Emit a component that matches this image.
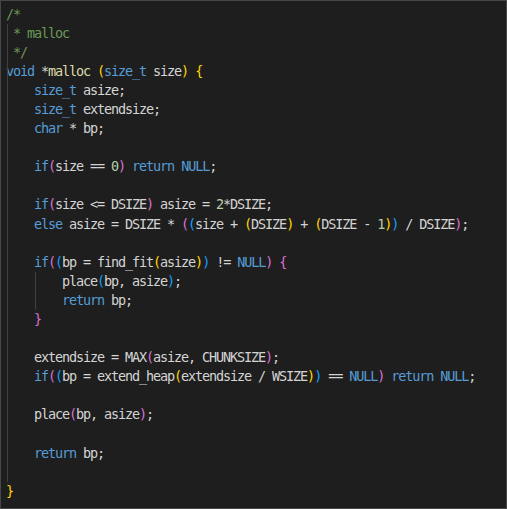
type Tok = [string, string];

const C: Record<string, string> = {
  c: "text-[#6a9955]",
  k: "text-[#569cd6]",
  t: "text-[#d4d4d4]",
  f: "text-[#dcdcaa]",
  n: "text-[#b5cea8]",
  y: "text-[#ffd700]",
  p: "text-[#da70d6]",
  b: "text-[#179fff]",
};

const lines: Tok[][] = [
  [["c", "/*"]],
  [["c", " * malloc"]],
  [["c", " */"]],
  [["k", "void"], ["t", " *"], ["f", "malloc"], ["t", " "], ["y", "("], ["k", "size_t"], ["t", " size"], ["y", ")"], ["t", " "], ["y", "{"]],
  [["t", "    "], ["k", "size_t"], ["t", " asize;"]],
  [["t", "    "], ["k", "size_t"], ["t", " extendsize;"]],
  [["t", "    "], ["k", "char"], ["t", " * bp;"]],
  [],
  [["t", "    "], ["k", "if"], ["p", "("], ["t", "size == "], ["n", "0"], ["p", ")"], ["t", " "], ["k", "return"], ["t", " "], ["k", "NULL"], ["t", ";"]],
  [],
  [["t", "    "], ["k", "if"], ["p", "("], ["t", "size <= DSIZE"], ["p", ")"], ["t", " asize = "], ["n", "2"], ["t", "*DSIZE;"]],
  [
    ["t", "    "], ["k", "else"], ["t", " asize = DSIZE * "], ["p", "("], ["b", "("], ["t", "size + "], ["y", "("], ["t", "DSIZE"], ["y", ")"],
    ["t", " + "], ["y", "("], ["t", "DSIZE - "], ["n", "1"], ["y", ")"], ["b", ")"], ["t", " / DSIZE"], ["p", ")"], ["t", ";"],
  ],
  [],
  [
    ["t", "    "], ["k", "if"], ["p", "("], ["b", "("], ["t", "bp = find_fit"], ["y", "("], ["t", "asize"], ["y", ")"], ["b", ")"],
    ["t", " != "], ["k", "NULL"], ["p", ")"], ["t", " "], ["p", "{"],
  ],
  [["t", "        place"], ["b", "("], ["t", "bp, asize"], ["b", ")"], ["t", ";"]],
  [["t", "        "], ["k", "return"], ["t", " bp;"]],
  [["t", "    "], ["p", "}"]],
  [],
  [["t", "    extendsize = MAX"], ["p", "("], ["t", "asize, CHUNKSIZE"], ["p", ")"], ["t", ";"]],
  [
    ["t", "    "], ["k", "if"], ["p", "("], ["b", "("], ["t", "bp = extend_heap"], ["y", "("], ["t", "extendsize / WSIZE"], ["y", ")"], ["b", ")"],
    ["t", " == "], ["k", "NULL"], ["p", ")"], ["t", " "], ["k", "return"], ["t", " "], ["k", "NULL"], ["t", ";"],
  ],
  [],
  [["t", "    place"], ["p", "("], ["t", "bp, asize"], ["p", ")"], ["t", ";"]],
  [],
  [["t", "    "], ["k", "return"], ["t", " bp;"]],
  [],
  [["y", "}"]],
];

export default function App() {
  return (
    <div className="relative h-[509px] w-[507px] overflow-hidden border border-[#474747] bg-[#1e1e1e] pl-[5px] pt-[3.5px] font-['DejaVu_Sans_Mono',monospace] text-[13.5px] leading-[19.1px] tracking-[-1.127px]">
      {/* indent guides */}
      <div className="absolute left-[6px] top-[22.5px] h-[458px] w-px bg-[#404040]" />
      <div className="absolute left-[34px] top-[271px] h-[38px] w-px bg-[#404040]" />

      {lines.map((toks, i) => (
        <div key={i} className="h-[19.1px] whitespace-pre">
          {toks.map(([c, s], j) => (
            <span key={j} className={C[c]}>
              {s}
            </span>
          ))}
        </div>
      ))}
    </div>
  );
}
